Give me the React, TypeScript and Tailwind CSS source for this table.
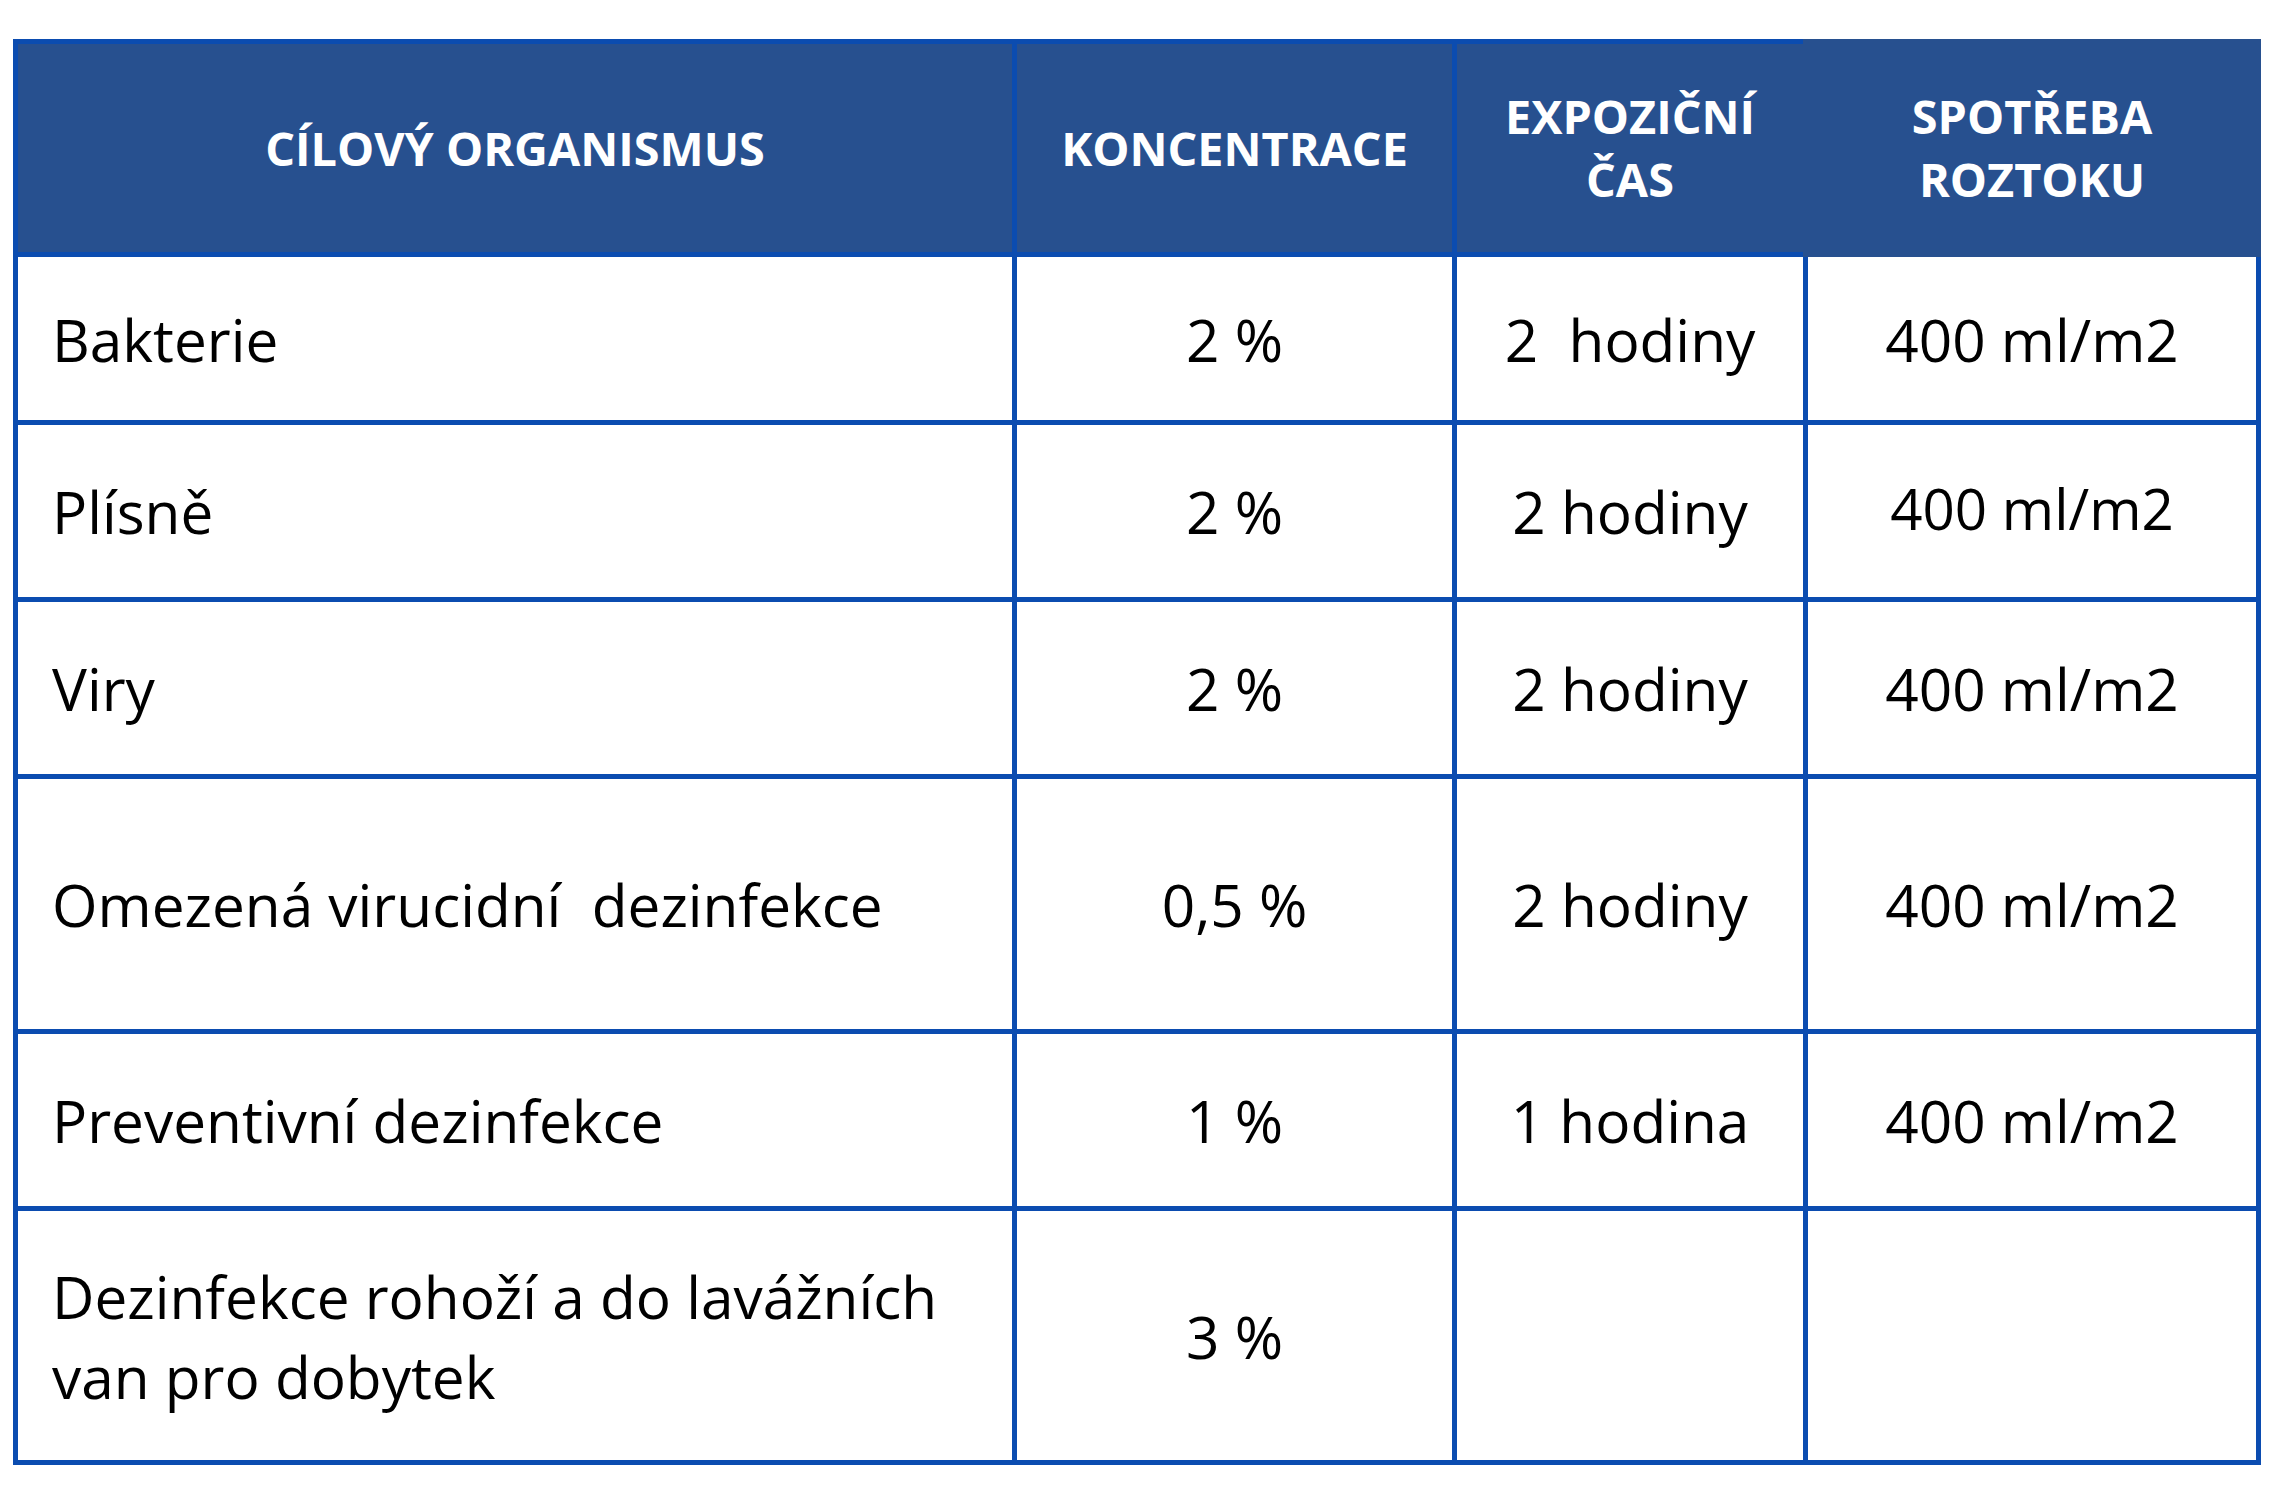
const FONT = "font-['Open_Sans',sans-serif]";

type Row = {
  organism: string[];
  concentration: string;
  time: string;
  usage: string;
  usageSmall?: boolean;
};

const ROWS: Row[] = [
  { organism: ["Bakterie"], concentration: "2 %", time: "2  hodiny", usage: "400 ml/m2" },
  { organism: ["Plísně"], concentration: "2 %", time: "2 hodiny", usage: "400 ml/m2", usageSmall: true },
  { organism: ["Viry"], concentration: "2 %", time: "2 hodiny", usage: "400 ml/m2" },
  { organism: ["Omezená virucidní  dezinfekce"], concentration: "0,5 %", time: "2 hodiny", usage: "400 ml/m2" },
  { organism: ["Preventivní dezinfekce"], concentration: "1 %", time: "1 hodina", usage: "400 ml/m2" },
  { organism: ["Dezinfekce rohoží a do lavážních", "van pro dobytek"], concentration: "3 %", time: "", usage: "" }
];

function HeadCell({ lines, className = "" }: { lines: string[]; className?: string }) {
  return (
    <div
      className={`flex items-center justify-center bg-[#27508f] text-center text-[46.8px] font-bold leading-[63px] text-white ${className}`}
    >
      <div>
        {lines.map((line) => (
          <div key={line}>{line}</div>
        ))}
      </div>
    </div>
  );
}

function BodyCell({
  children,
  center = true,
  small = false
}: {
  children?: React.ReactNode;
  center?: boolean;
  small?: boolean;
}) {
  return (
    <div
      className={`flex items-center bg-white leading-[80px] whitespace-pre text-black ${
        small ? "pb-[4px] text-[56.5px]" : "text-[58.5px]"
      } ${center ? "justify-center text-center" : "pl-[34px]"}`}
    >
      {children}
    </div>
  );
}

export default function App() {
  return (
    <div className={`min-h-[1487px] w-[2275px] bg-white pl-[13px] pt-[39px] ${FONT}`}>
      <div className="grid w-[2248px] grid-cols-[994px_435px_346px_448px] grid-rows-[208px_163px_172px_172px_250px_172px_249px] gap-[5px] bg-[#0b4cb0] p-[5px]">
        <HeadCell lines={["CÍLOVÝ ORGANISMUS"]} />
        <HeadCell lines={["KONCENTRACE"]} />
        <HeadCell lines={["EXPOZIČNÍ", "ČAS"]} />
        <HeadCell lines={["SPOTŘEBA", "ROZTOKU"]} className="-mb-[5px] -ml-[5px] -mr-[5px] -mt-[5px]" />

        {ROWS.map((row, index) => (
          <div key={index} className="contents">
            <BodyCell center={false}>
              <div>
                {row.organism.map((line) => (
                  <div key={line}>{line}</div>
                ))}
              </div>
            </BodyCell>
            <BodyCell>{row.concentration}</BodyCell>
            <BodyCell>{row.time}</BodyCell>
            <BodyCell small={row.usageSmall}>{row.usage}</BodyCell>
          </div>
        ))}
      </div>
    </div>
  );
}
